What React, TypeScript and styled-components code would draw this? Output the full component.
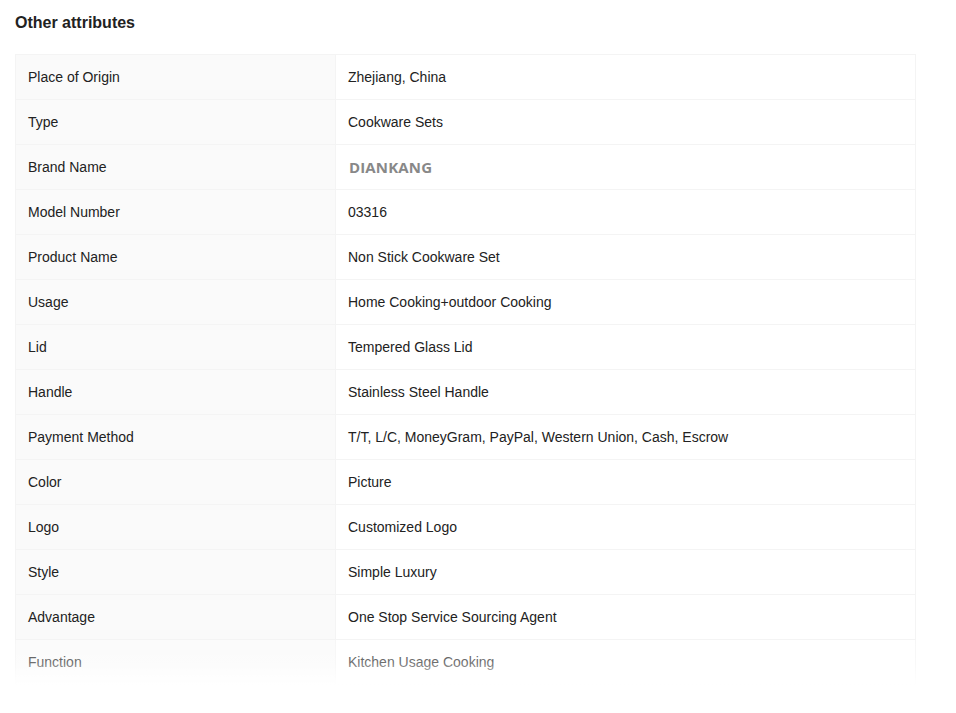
import { createGlobalStyle, styled } from "styled-components";

const attributes = [
  { label: "Place of Origin", value: "Zhejiang, China" },
  { label: "Type", value: "Cookware Sets" },
  { label: "Brand Name", value: "DIANKANG", brand: true },
  { label: "Model Number", value: "03316" },
  { label: "Product Name", value: "Non Stick Cookware Set" },
  { label: "Usage", value: "Home Cooking+outdoor Cooking" },
  { label: "Lid", value: "Tempered Glass Lid" },
  { label: "Handle", value: "Stainless Steel Handle" },
  { label: "Payment Method", value: "T/T, L/C, MoneyGram, PayPal, Western Union, Cash, Escrow" },
  { label: "Color", value: "Picture" },
  { label: "Logo", value: "Customized Logo" },
  { label: "Style", value: "Simple Luxury" },
  { label: "Advantage", value: "One Stop Service Sourcing Agent" },
  { label: "Function", value: "Kitchen Usage Cooking" },
];

const GlobalStyle = createGlobalStyle`
  html, body {
    margin: 0;
    background: #fff;
  }
  body {
    font-family: "Liberation Sans", Arial, sans-serif;
    color: #222;
  }
`;

const Page = styled.div`
  width: 901px;
  padding: 13px 40px 0 15px;
`;

const Title = styled.h3`
  margin: 0 0 22px;
  font-size: 16px;
  line-height: 19px;
  font-weight: 700;
  color: #222;
`;

const TableClip = styled.div`
  position: relative;
  height: 631px;
  overflow: hidden;
`;

const Table = styled.div`
  border-top: 1px solid #f4f4f4;
  border-left: 1px solid #f4f4f4;
  border-right: 1px solid #f4f4f4;
`;

const Row = styled.div`
  display: grid;
  grid-template-columns: 320px 1fr;
  height: 45px;
  box-sizing: border-box;
  border-bottom: 1px solid #f4f4f4;
  font-size: 14px;
`;

const Label = styled.div`
  display: flex;
  align-items: center;
  padding-left: 12px;
  background: #fafafa;
  border-right: 1px solid #f4f4f4;
`;

const Value = styled.div`
  display: flex;
  align-items: center;
  padding-left: 12px;
`;

const Brand = styled.span`
  font-family: "Open Sans", sans-serif;
  font-size: 15px;
  font-weight: 700;
  letter-spacing: 0.15px;
  margin-left: 1px;
  color: #888;
`;

const Fade = styled.div`
  position: absolute;
  left: 0;
  right: 0;
  bottom: 0;
  height: 45px;
  background: linear-gradient(
    rgba(255, 255, 255, 0.2),
    rgba(255, 255, 255, 0.35) 50%,
    rgba(255, 255, 255, 1)
  );
`;

export default function App() {
  return (
    <Page>
      <GlobalStyle />
      <Title>Other attributes</Title>
      <TableClip>
        <Table>
          {attributes.map((item) => (
            <Row key={item.label}>
              <Label>{item.label}</Label>
              <Value>{item.brand ? <Brand>{item.value}</Brand> : item.value}</Value>
            </Row>
          ))}
        </Table>
        <Fade />
      </TableClip>
    </Page>
  );
}
